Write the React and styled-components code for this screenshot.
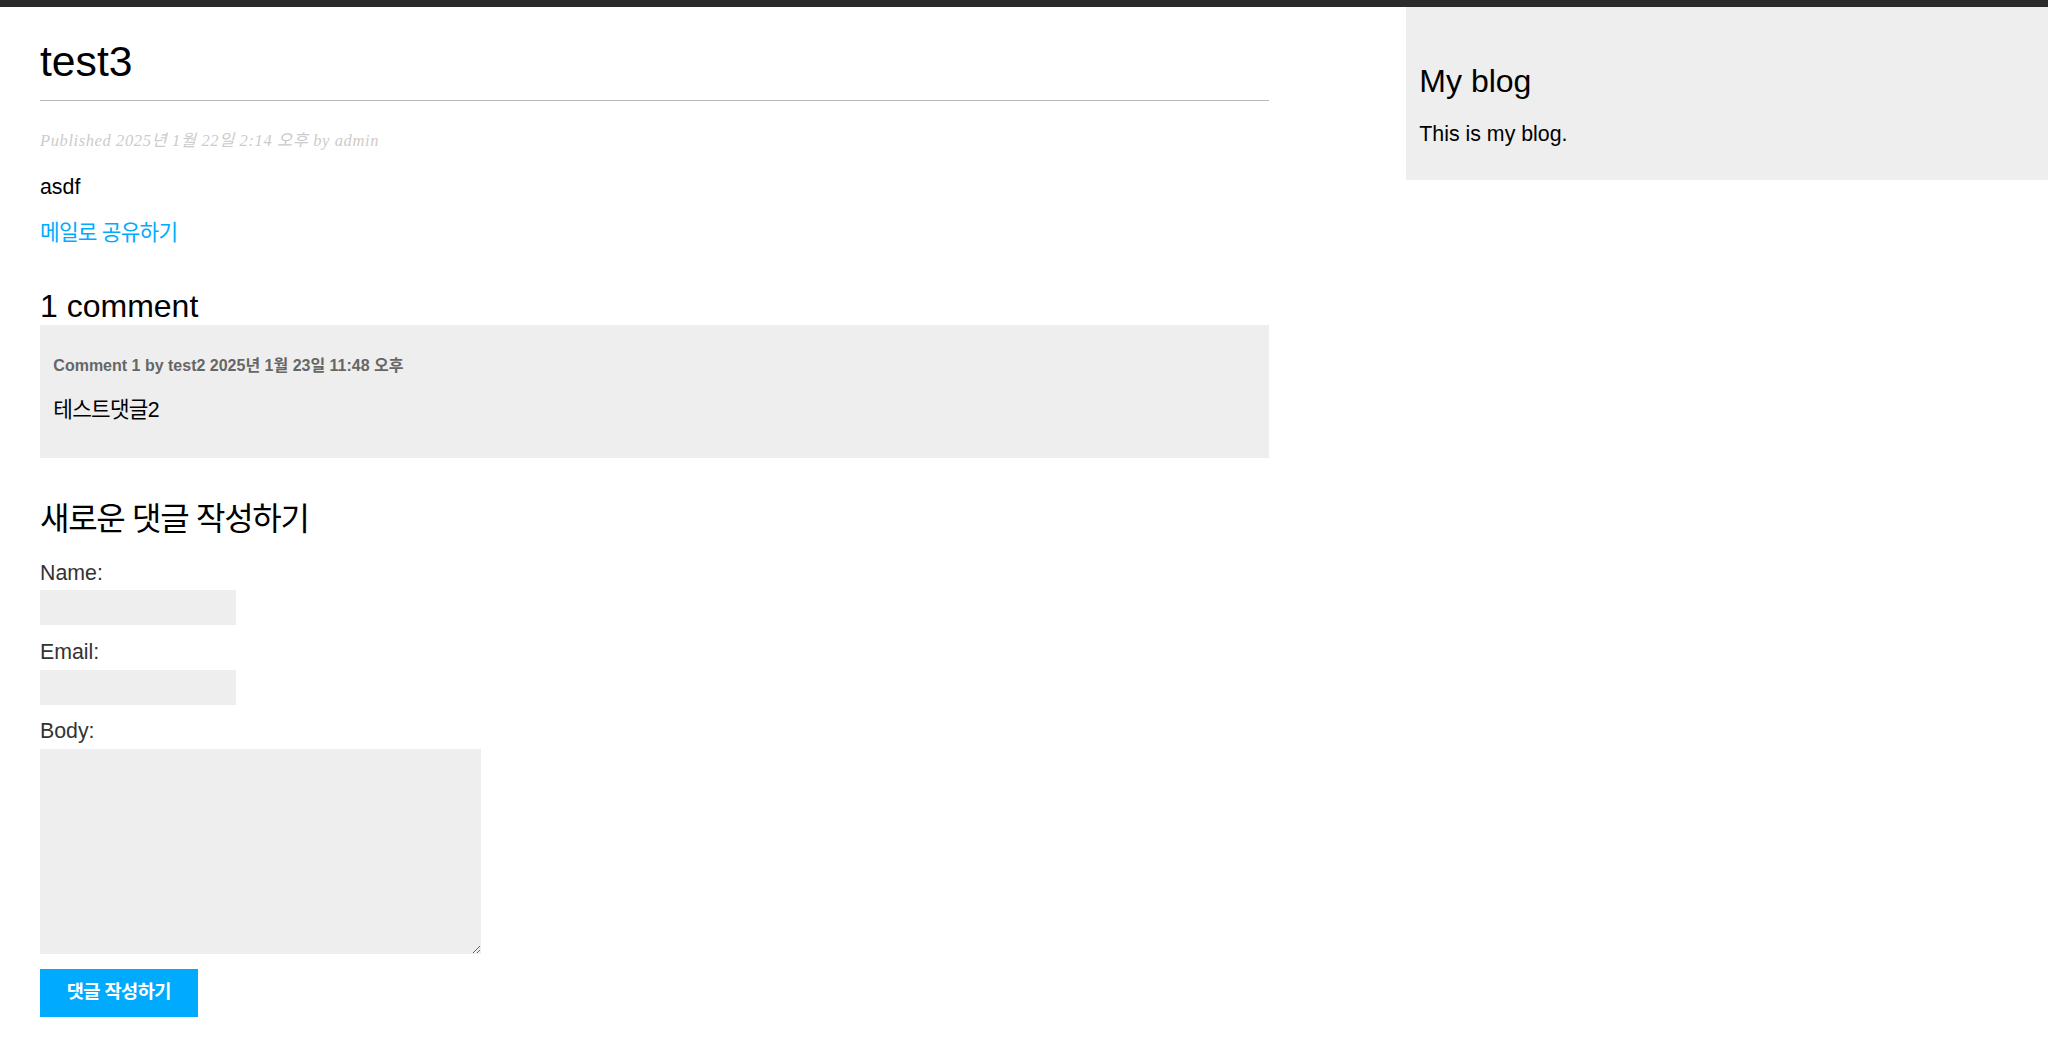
import React from "react";
import styled, { createGlobalStyle } from "styled-components";

const GlobalStyle = createGlobalStyle`
  html, body {
    margin: 0;
    padding: 0;
    background: #fff;
  }
  body {
    font-family: "Liberation Sans", "Noto Sans CJK KR", sans-serif;
    font-size: 21.33px;
    line-height: 1.15;
    color: #000;
  }
`;

const sans = `"Liberation Sans", "Noto Sans CJK KR", sans-serif`;

const TopBar = styled.div`
  height: 7px;
  background: #2b2b2b;
`;

const Columns = styled.div`
  display: flex;
  justify-content: space-between;
  align-items: flex-start;
`;

const Content = styled.main`
  width: 1229px;
  padding-left: 40px;
`;

const Sidebar = styled.aside`
  box-sizing: border-box;
  width: 642px;
  padding: 13.33px;
  background: #eeeeee;
`;

const Title = styled.h1`
  margin: 29.5px 0 31px;
  padding-bottom: 14.5px;
  border-bottom: 1.33px solid #bbb;
  font-family: ${sans};
  font-size: 42.67px;
  font-weight: normal;
  line-height: 1.15;
`;

const Heading = styled.h2`
  margin: ${({ $top }) => $top}px 0 0;
  font-family: ${sans};
  font-size: 32px;
  font-weight: normal;
  line-height: 1.15;
  letter-spacing: ${({ $ko }) => ($ko ? "-0.04em" : "normal")};
`;

const Text = styled.p`
  margin: ${({ $m }) => $m || "21.33px 0"};
  font-size: 21.33px;
  line-height: 1.15;
  letter-spacing: ${({ $ko }) => ($ko ? "-0.035em" : "normal")};
`;

const Date = styled.p`
  margin: 16px 0 24.8px;
  font-family: "Liberation Serif", "Noto Sans CJK KR", serif;
  font-style: italic;
  font-size: 16.5px;
  letter-spacing: 0.6px;
  line-height: 1.12;
  color: #ccc;
`;

const Link = styled.a`
  color: #00abff;
  text-decoration: none;
`;

const Comment = styled.div`
  padding: 16px 13.33px 14.3px;
  background: #eeeeee;
`;

const Info = styled.p`
  margin: 16px 0 22.5px;
  font-size: 16px;
  font-weight: bold;
  line-height: 1.15;
  color: #666;
`;

const Form = styled.form`
  display: flex;
  flex-direction: column;
  align-items: flex-start;
  margin-top: 23px;
`;

const Label = styled.label`
  margin-bottom: 5.33px;
  font-size: 21.33px;
  line-height: 1.15;
  color: #333;
`;

const Input = styled.input`
  box-sizing: border-box;
  width: 196px;
  height: 35px;
  margin: 0 0 14.5px;
  padding: 5px 13px;
  border: 0;
  background: #eeeeee;
  font-family: ${sans};
  font-size: 18.67px;
  outline: none;
`;

const TextArea = styled.textarea`
  box-sizing: border-box;
  width: 441px;
  height: 205px;
  margin: 0 0 14.5px;
  padding: 5px 13px;
  border: 0;
  background: #eeeeee;
  font-family: ${sans};
  font-size: 18.67px;
  outline: none;
`;

const Submit = styled.button`
  height: 48px;
  padding: 0 26.67px;
  border: 0;
  background: #00abff;
  color: #fff;
  font-family: ${sans};
  font-size: 18.67px;
  font-weight: bold;
  letter-spacing: -0.03em;
  line-height: 1;
  cursor: pointer;
`;

const fields = [
  { id: "name", label: "Name:" },
  { id: "email", label: "Email:" },
];

export default function App() {
  return (
    <>
      <GlobalStyle />
      <TopBar />
      <Columns>
        <Content>
          <Title>test3</Title>
          <Date>Published 2025년 1월 22일 2:14 오후 by admin</Date>
          <Text>asdf</Text>
          <Text $ko>
            <Link href="#">메일로 공유하기</Link>
          </Text>

          <Heading $top={42.7}>1 comment</Heading>
          <Comment>
            <Info>Comment 1 by test2 2025년 1월 23일 11:48 오후</Info>
            <Text $ko $m="0 0 21.33px">테스트댓글2</Text>
          </Comment>

          <Heading $top={42.6} $ko>새로운 댓글 작성하기</Heading>
          <Form onSubmit={e => e.preventDefault()}>
            {fields.map(f => (
              <React.Fragment key={f.id}>
                <Label htmlFor={f.id}>{f.label}</Label>
                <Input id={f.id} type="text" />
              </React.Fragment>
            ))}
            <Label htmlFor="body">Body:</Label>
            <TextArea id="body" />
            <Submit type="submit">댓글 작성하기</Submit>
          </Form>
        </Content>

        <Sidebar>
          <Heading $top={42.6}>My blog</Heading>
          <Text $m="22.6px 0 20px">This is my blog.</Text>
        </Sidebar>
      </Columns>
    </>
  );
}
